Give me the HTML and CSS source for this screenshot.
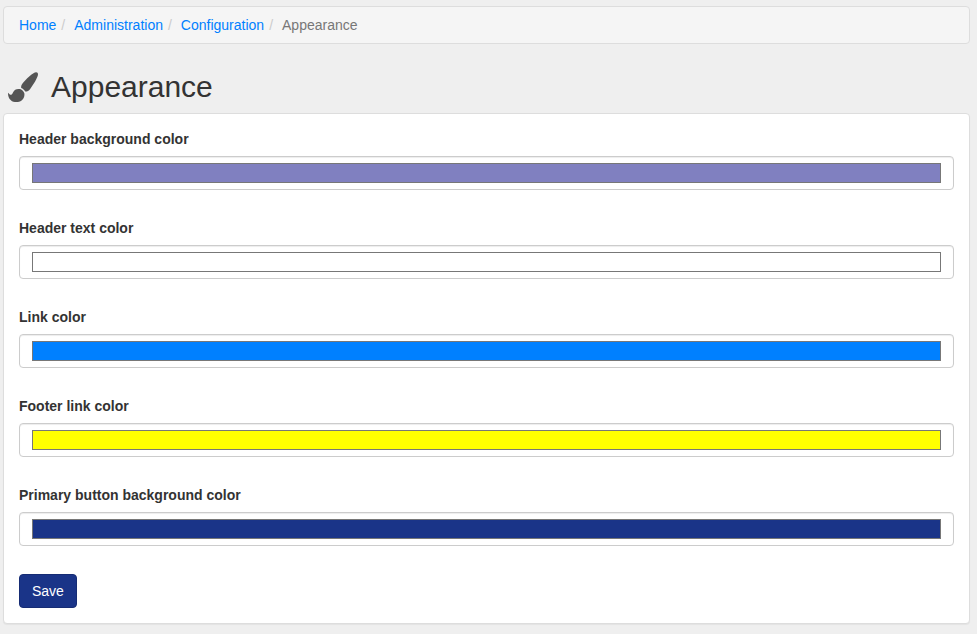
FILE: index.html
```html
<!DOCTYPE html>
<html lang="en">
<head>
<meta charset="utf-8">
<title>Appearance</title>
<link rel="stylesheet" href="styles.css">
</head>
<body>
<ol class="breadcrumb">
  <li><a href="#">Home</a></li>
  <li><a href="#">Administration</a></li>
  <li><a href="#">Configuration</a></li>
  <li class="active">Appearance</li>
</ol>
<h1 class="page-title">
  <svg class="brush" viewBox="0 0 30 30" aria-hidden="true">
    <path d="M28.2.2C25 .2 17.400 7.600 14.500 11.500C13.200 13.200 13 14.500 13.200 16C14.800 16.600 16.600 18 17.200 19.600C19.200 19.700 20.800 18.800 22 17.200C25 13 30 5.400 30 2.200C30 1 29.300.2 28.200.2Z"/>
    <path d="M12.100 17.100C8.900 16.500 6.300 17.600 5 20.400C4.200 22.200 3.200 23.200 1.800 22.500L0 20.700C-.2 26 3 30.100 8.200 30.100C13.500 30.100 16.800 26.500 16.400 21.600C15.700 19.300 14.300 17.800 12.100 17.100Z"/>
  </svg>
  <span>Appearance</span>
</h1>
<form class="panel">
  <div class="form-group">
    <label for="header-bg">Header background color</label>
    <input class="form-control" type="color" id="header-bg" value="#8080c0">
  </div>
  <div class="form-group">
    <label for="header-text">Header text color</label>
    <input class="form-control" type="color" id="header-text" value="#ffffff">
  </div>
  <div class="form-group">
    <label for="link">Link color</label>
    <input class="form-control" type="color" id="link" value="#0080ff">
  </div>
  <div class="form-group">
    <label for="footer-link">Footer link color</label>
    <input class="form-control" type="color" id="footer-link" value="#ffff00">
  </div>
  <div class="form-group">
    <label for="primary-bg">Primary button background color</label>
    <input class="form-control" type="color" id="primary-bg" value="#1a3488">
  </div>
  <button class="btn" type="button">Save</button>
</form>
</body>
</html>
```
FILE: styles.css
```css
* {
  box-sizing: border-box;
}

body {
  margin: 0;
  padding: 6px 7px 10px 3px;
  background: #efefef;
  color: #333;
  font: 14px/20px "Liberation Sans", Arial, sans-serif;
}

.breadcrumb {
  display: flex;
  height: 38px;
  margin: 0;
  padding: 8px 15px;
  list-style: none;
  background: #f5f5f5;
  border: 1px solid #ddd;
  border-radius: 4px;
}

.breadcrumb li + li::before {
  content: "/";
  padding: 0 9px 0 5px;
  color: #ccc;
}

.breadcrumb a {
  color: #0080ff;
  text-decoration: none;
}

.breadcrumb .active {
  color: #777;
}

.page-title {
  display: flex;
  align-items: center;
  gap: 13px;
  height: 33px;
  margin: 26px 0 10px;
  padding-left: 5px;
  font-size: 30px;
  font-weight: 400;
  line-height: 33px;
}

.brush {
  width: 30px;
  height: 30px;
  fill: #555;
}

.panel {
  height: 511px;
  padding: 15px;
  background: #fff;
  border: 1px solid #ddd;
  border-radius: 4px;
  box-shadow: 0 1px 1px rgba(0, 0, 0, .05);
}

.form-group {
  margin-bottom: 28px;
}

.form-group label {
  display: block;
  margin-bottom: 7px;
  font-weight: 700;
}

.form-control {
  display: block;
  appearance: none;
  width: 100%;
  height: 34px;
  padding: 6px 12px;
  background: #fff;
  border: 1px solid #ccc;
  border-radius: 4px;
  box-shadow: inset 0 1px 1px rgba(0, 0, 0, .075);
}

.form-control::-webkit-color-swatch-wrapper {
  padding: 0;
}

.form-control::-webkit-color-swatch {
  border: 1px solid #777;
  border-radius: 0;
}

.btn {
  display: block;
  height: 34px;
  padding: 6px 12px;
  color: #fff;
  background: #1a3488;
  border: 1px solid #162c74;
  border-radius: 4px;
  font: inherit;
}
```
